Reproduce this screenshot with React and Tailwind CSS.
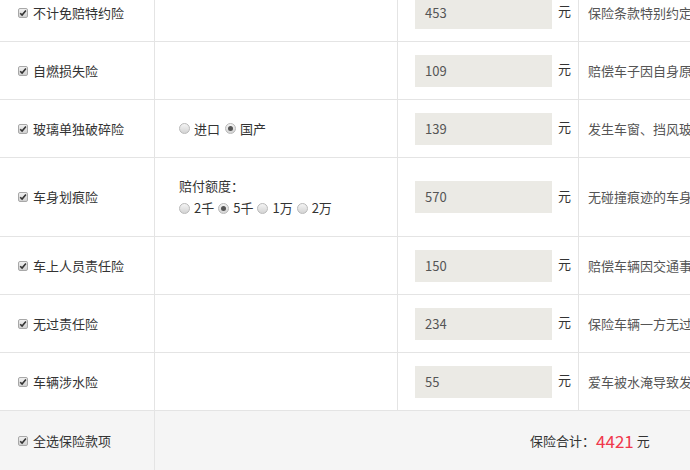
import React from "react";

const font = { fontFamily: '"Noto Sans CJK SC", "Noto Sans", sans-serif' };

function Check() {
  return (
    <span className="inline-flex items-center justify-center w-[10px] h-[10px] rounded-[2px] border border-[#a8a8a8] bg-gradient-to-b from-[#f0f0f0] to-[#d0d0d0] mr-[5px] shrink-0">
      <svg width="8" height="8" viewBox="0 0 8 8">
        <path d="M1.2 4.2 L3.1 6.1 L6.9 1.6" fill="none" stroke="#333" strokeWidth="1.6" />
      </svg>
    </span>
  );
}

function Radio({ checked }) {
  return (
    <span className="inline-flex items-center justify-center w-[11px] h-[11px] rounded-full border border-[#b9b9b9] bg-gradient-to-b from-[#f4f4f4] to-[#d4d4d4] shrink-0">
      {checked && <span className="w-[5px] h-[5px] rounded-full bg-[#555]" />}
    </span>
  );
}

const rows = [
  { name: "不计免赔特约险", price: "453", desc: "保险条款特别约定免赔部分由保险公司赔偿" },
  { name: "自燃损失险", price: "109", desc: "赔偿车子因自身原因起火造成的损失" },
  { name: "玻璃单独破碎险", price: "139", desc: "发生车窗、挡风玻璃单独破碎的损失", glass: true },
  { name: "车身划痕险", price: "570", desc: "无碰撞痕迹的车身表面油漆划痕损失", scratch: true },
  { name: "车上人员责任险", price: "150", desc: "赔偿车辆因交通事故造成车上人员伤亡" },
  { name: "无过责任险", price: "234", desc: "保险车辆一方无过错时承担的赔偿责任" },
  { name: "车辆涉水险", price: "55", desc: "爱车被水淹导致发动机损坏的损失" },
];

export default function App() {
  return (
    <div className="w-[690px] h-[470px] overflow-hidden bg-white text-[13px] text-[#333]" style={font}>
      <div className="w-[900px] -mt-[16px]">
        {rows.map((r, i) => (
          <div
            key={i}
            className={`flex border-b border-[#e4e4e4] ${r.scratch ? "h-[79px]" : "h-[58px]"}`}
          >
            <div className="w-[155px] border-r border-[#e4e4e4] flex items-center pl-[18px] shrink-0">
              <Check />
              <span>{r.name}</span>
            </div>
            <div className="w-[243px] border-r border-[#e4e4e4] flex items-center pl-[24px] shrink-0">
              {r.glass && (
                <div className="flex items-center">
                  <Radio />
                  <span className="ml-[4px] mr-[5px]">进口</span>
                  <Radio checked />
                  <span className="ml-[4px]">国产</span>
                </div>
              )}
              {r.scratch && (
                <div className="flex flex-col leading-[22px]">
                  <span>赔付额度：</span>
                  <div className="flex items-center">
                    <Radio />
                    <span className="ml-[4px] mr-[4px]">2千</span>
                    <Radio checked />
                    <span className="ml-[4px] mr-[4px]">5千</span>
                    <Radio />
                    <span className="ml-[4px] mr-[4px]">1万</span>
                    <Radio />
                    <span className="ml-[4px]">2万</span>
                  </div>
                </div>
              )}
            </div>
            <div className="w-[181px] border-r border-[#e4e4e4] flex items-center pl-[17px] shrink-0">
              <div className="w-[137px] h-[32px] bg-[#ebeae5] flex items-center pl-[10px] text-[#555] text-[13px]">
                {r.price}
              </div>
              <span className="ml-[6px] -mt-[3px] text-[#333]">元</span>
            </div>
            <div className="flex-1 flex items-center pl-[9px] text-[#555] whitespace-nowrap">
              {r.desc}
            </div>
          </div>
        ))}
        <div className="flex h-[80px] bg-[#f5f5f5]">
          <div className="w-[155px] border-r border-[#e4e4e4] flex items-center pl-[18px] pb-[20px] shrink-0">
            <Check />
            <span>全选保险款项</span>
          </div>
          <div className="flex items-center pl-[375px] pb-[20px]">
            <span>保险合计：</span>
            <span className="text-[#f0384c] text-[17px] ml-[1px] mr-[3px]">4421</span>
            <span>元</span>
          </div>
        </div>
      </div>
    </div>
  );
}
